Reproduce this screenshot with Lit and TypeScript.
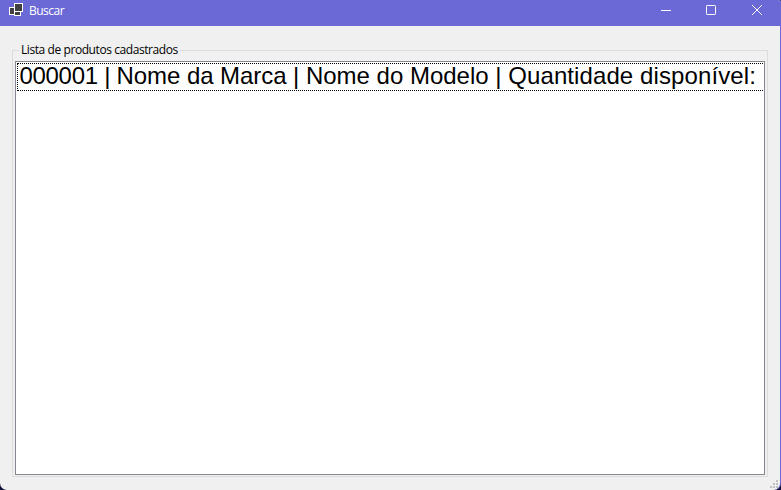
import { LitElement, html, css } from "lit";
import { customElement, property } from "lit/decorators.js";

@customElement("title-bar")
class TitleBar extends LitElement {
  @property() caption = "";
  static styles = css`
    :host { display: flex; height: 26px; background: #6b69d6; color: #fff; }
    svg { display: block; }
    .app { margin: 3px 0 0 9px; width: 14px; height: 14px; }
    .text { margin-left: 6px; font: 12px/22px "Open Sans", sans-serif; letter-spacing: -0.5px; flex: 1; }
    .buttons { display: flex; margin-right: 1px; }
    .buttons svg { width: 46px; height: 20px; }
  `;
  render() {
    return html`
      <svg class="app" viewBox="0 0 14 14" shape-rendering="crispEdges">
        <rect x="0.5" y="4.5" width="5" height="7" fill="#404040" stroke="#fff" />
        <rect x="5.5" y="8.5" width="6" height="4" fill="#404040" stroke="#fff" />
        <rect x="5.5" y="0.5" width="8" height="8" fill="#404040" stroke="#fff" />
      </svg>
      <div class="text">${this.caption}</div>
      <div class="buttons">
        <svg viewBox="0 0 46 20"><path d="M19 10.5h10" stroke="#fff" /></svg>
        <svg viewBox="0 0 46 20"><rect x="18.5" y="5.5" width="9" height="9" rx="0.7" fill="none" stroke="#fff" /></svg>
        <svg viewBox="0 0 46 20"><path d="M18 5l10 10M28 5L18 15" stroke="#fff" /></svg>
      </div>`;
  }
}

@customElement("app-root")
class AppRoot extends LitElement {
  static styles = css`
    :host { display: block; width: 781px; height: 490px; background: #10103a; overflow: hidden; }
    .window { box-sizing: border-box; height: 490px; display: flex; flex-direction: column; background: #f0f0f0;
      border-right: 1px solid #6b69d6; border-radius: 0 2px 7px 7px; overflow: hidden; position: relative; }
    title-bar { flex: none; margin-right: -1px; }
    fieldset { box-sizing: border-box; margin: 16px 12px 13px; flex: 1; min-width: 0; min-height: 0; border: 1px solid #dcdcdc;
      padding: 2px 2px 1px; display: flex; }
    legend { margin-left: 4px; padding: 0 2px; height: 17px; white-space: nowrap; color: #000;
      font: 12px/16px "Open Sans", sans-serif; }
    .label { display: inline-block; letter-spacing: -0.42px; }
    .list { box-sizing: border-box; flex: 1; min-width: 0; background: #fff; border: 1px solid #828790; padding: 1px; }
    .item { box-sizing: border-box; height: 28px; overflow: hidden; padding-left: 1.4px; border: 1px dotted #000; border-right: 0;
      white-space: pre; color: #000; font: 24px/24px "Liberation Sans", Arial, sans-serif; }
    .code { letter-spacing: -0.28px; }
    .brand { letter-spacing: -0.06px; }
    .stock { letter-spacing: 0.1px; }
    .grip { position: absolute; right: 2px; bottom: 2px; width: 8px; height: 8px; }
  `;
  render() {
    return html`
      <div class="window">
        <title-bar caption="Buscar"></title-bar>
        <fieldset>
          <legend><span class="label">Lista de produtos cadastrados</span></legend>
          <div class="list">
            <div class="item"><span class="code">000001 | </span><span class="brand">Nome da Marca | </span><span>Nome do Modelo | </span><span class="stock">Quantidade disponível:</span></div>
          </div>
        </fieldset>
        <svg class="grip" viewBox="0 0 8 8" fill="#bfbfbf" shape-rendering="crispEdges">
          <path d="M6 0h2v2H6zM3 3h2v2H3zM6 3h2v2H6zM0 6h2v2H0zM3 6h2v2H3zM6 6h2v2H6z" />
        </svg>
      </div>`;
  }
}
